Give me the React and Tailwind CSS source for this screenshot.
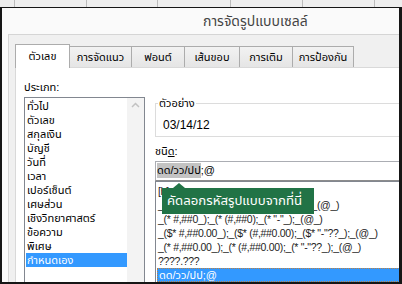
export default function App() {
  const cats = ["ทั่วไป","ตัวเลข","สกุลเงิน","บัญชี","วันที่","เวลา","เปอร์เซ็นต์","เศษส่วน","เชิงวิทยาศาสตร์","ข้อความ","พิเศษ","กำหนดเอง"];
  const formats = [
    "[h]:mm:ss",
    "_($* #,##0_);_($* (#,##0);_($* \"-\"_);_(@_)",
    "_(* #,##0_);_(* (#,##0);_(* \"-\"_);_(@_)",
    "_($* #,##0.00_);_($* (#,##0.00);_($* \"-\"??_);_(@_)",
    "_(* #,##0.00_);_(* (#,##0.00);_(* \"-\"??_);_(@_)",
    "????.???",
  ];
  return (
    <div className="relative w-[402px] h-[284px] flex flex-col overflow-hidden bg-white text-[11px] text-black [font-family:'Liberation_Sans','Noto_Sans_Thai','Noto_Sans',sans-serif]">
      <div className="h-[7px] flex bg-[#eeeeee] shrink-0">
        <div className="w-[15px] border-r border-[#bcbcbc]" />
        <div className="w-[72px] border-r border-[#bcbcbc]" />
        <div className="w-[71px] border-r border-[#bcbcbc]" />
        <div className="w-[73px] border-r border-[#bcbcbc]" />
        <div className="w-[72px] border-r border-[#bcbcbc]" />
        <div className="w-[72px] border-r border-[#bcbcbc]" />
        <div className="flex-1" />
      </div>
      <div className="flex-1 min-h-0 flex flex-col overflow-hidden bg-[#fafafa] border-l-2 border-t border-r-[3px] border-b-2 border-[#161616]">
        <div className="h-[26px] shrink-0 pl-[201px] flex items-center text-[14px] text-[#444444]">
          การจัดรูปแบบเซลล์
        </div>
        <div className="flex-1 min-h-0 ml-[6px] border-t border-l border-[#d5d5d5] bg-[#f0f0f0] pl-[6px] pt-[9px] flex flex-col">
          <div className="relative z-10 -mb-px h-[24px] flex items-end shrink-0">
            <div className="h-[24px] w-[55px] bg-white border border-b-0 border-[#acacac] flex items-center justify-center">ตัวเลข</div>
            <div className="h-[21px] mb-px w-[62px] bg-gradient-to-b from-[#f2f2f2] to-[#e5e5e5] border-t border-r border-[#acacac] flex items-center justify-center">การจัดแนว</div>
            <div className="h-[21px] mb-px w-[53px] bg-gradient-to-b from-[#f2f2f2] to-[#e5e5e5] border-t border-r border-[#acacac] flex items-center justify-center">ฟอนต์</div>
            <div className="h-[21px] mb-px w-[55px] bg-gradient-to-b from-[#f2f2f2] to-[#e5e5e5] border-t border-r border-[#acacac] flex items-center justify-center">เส้นขอบ</div>
            <div className="h-[21px] mb-px w-[53px] bg-gradient-to-b from-[#f2f2f2] to-[#e5e5e5] border-t border-r border-[#acacac] flex items-center justify-center">การเติม</div>
            <div className="h-[21px] mb-px w-[61px] bg-gradient-to-b from-[#f2f2f2] to-[#e5e5e5] border-t border-r border-[#acacac] flex items-center justify-center">การป้องกัน</div>
          </div>
          <div className="flex-1 min-h-0 bg-white border-t border-l border-[#d9d9d9] flex pl-[8px]">
            <div className="w-[121px] shrink-0 flex flex-col pt-[12px]">
              <div className="h-[14px] leading-[14px] mb-[3px]">ประเภท:</div>
              <div className="flex-1 border border-b-0 border-[#828790] flex">
                <div className="flex-1 pl-px pt-px">
                  {cats.map((c, i) => (
                    <div key={c} className={"h-[14px] leading-[14px] pl-px " + (i === cats.length - 1 ? "bg-[#3399ff] text-white" : "")}>{c}</div>
                  ))}
                </div>
                <div className="w-[17px] bg-[#f3f3f3] flex justify-center pt-[4px]">
                  <svg width="9" height="6" viewBox="0 0 9 6"><path d="M1 5 L4.5 1.5 L8 5" fill="none" stroke="#c2c2c2" strokeWidth="1.5" /></svg>
                </div>
              </div>
            </div>
            <div className="ml-[10px] w-[260px] shrink-0 flex flex-col pt-[35px]">
              <div className="relative h-[34px] border border-[#dcdcdc] pl-[7px] pt-[13px]">
                <div className="absolute left-[2px] -top-[8px] px-px bg-white leading-[14px]">ตัวอย่าง</div>
                <div className="leading-[16px] text-[12px]">03/14/12</div>
              </div>
              <div className="mt-[7px] h-[14px] leading-[14px]">ชนิ<span className="underline">ด</span>:</div>
              <div className="mt-[3px] h-[21px] border border-[#abadb3] border-b-[#8c8c8c] flex items-center pl-px">
                <span className="bg-[#c3c3c3] leading-[15px]">ดด/วว/ปป</span><span className="leading-[15px]">;@</span>
              </div>
              <div className="flex-1 border border-b-0 border-[#828790] pt-[2px] pl-px text-[#222222]">
                {formats.map((f) => (
                  <div key={f} className="h-[14px] leading-[14px] pl-px whitespace-nowrap text-[10.5px] tracking-[-0.3px]">{f}</div>
                ))}
                <div className="h-[14px] leading-[12px] pl-px bg-[#3399ff] text-white border border-dotted border-[#c08040]">ดด/วว/ปป;@</div>
              </div>
            </div>
          </div>
        </div>
      </div>
      <div className="absolute left-[162px] top-[188px] w-[152px] h-[26px] bg-[#217346] text-white text-[13.2px] flex items-center pl-[5px] whitespace-nowrap">
        <div className="absolute left-[11px] -top-[5px] w-0 h-0 border-l-[6px] border-r-[6px] border-b-[5px] border-l-transparent border-r-transparent border-b-[#217346]" />
        คัดลอกรหัสรูปแบบจากที่นี่
      </div>
    </div>
  );
}
